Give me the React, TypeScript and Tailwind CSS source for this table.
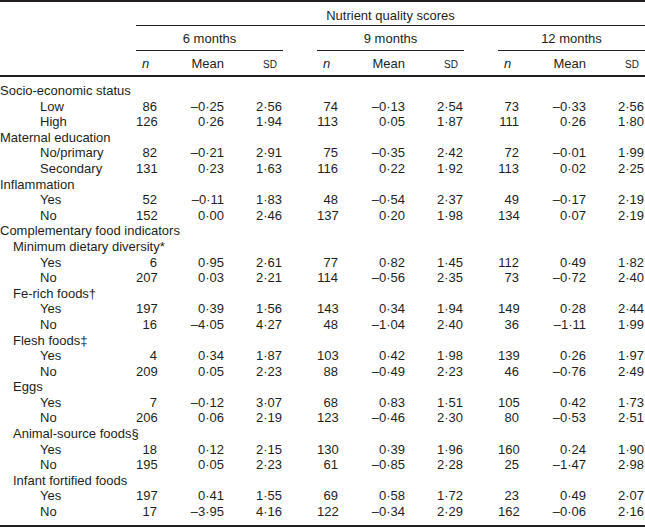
type Row = {
  label: string;
  level: 0 | 1 | 2;
  values?: string[][];
};

const rows: Row[] = [
  { label: 'Socio-economic status', level: 0 },
  { label: 'Low', level: 2, values: [['86', '–0·25', '2·56'], ['74', '–0·13', '2·54'], ['73', '–0·33', '2·56']] },
  { label: 'High', level: 2, values: [['126', '0·26', '1·94'], ['113', '0·05', '1·87'], ['111', '0·26', '1·80']] },
  { label: 'Maternal education', level: 0 },
  { label: 'No/primary', level: 2, values: [['82', '–0·21', '2·91'], ['75', '–0·35', '2·42'], ['72', '–0·01', '1·99']] },
  { label: 'Secondary', level: 2, values: [['131', '0·23', '1·63'], ['116', '0·22', '1·92'], ['113', '0·02', '2·25']] },
  { label: 'Inflammation', level: 0 },
  { label: 'Yes', level: 2, values: [['52', '–0·11', '1·83'], ['48', '–0·54', '2·37'], ['49', '–0·17', '2·19']] },
  { label: 'No', level: 2, values: [['152', '0·00', '2·46'], ['137', '0·20', '1·98'], ['134', '0·07', '2·19']] },
  { label: 'Complementary food indicators', level: 0 },
  { label: 'Minimum dietary diversity*', level: 1 },
  { label: 'Yes', level: 2, values: [['6', '0·95', '2·61'], ['77', '0·82', '1·45'], ['112', '0·49', '1·82']] },
  { label: 'No', level: 2, values: [['207', '0·03', '2·21'], ['114', '–0·56', '2·35'], ['73', '–0·72', '2·40']] },
  { label: 'Fe-rich foods†', level: 1 },
  { label: 'Yes', level: 2, values: [['197', '0·39', '1·56'], ['143', '0·34', '1·94'], ['149', '0·28', '2·44']] },
  { label: 'No', level: 2, values: [['16', '–4·05', '4·27'], ['48', '–1·04', '2·40'], ['36', '–1·11', '1·99']] },
  { label: 'Flesh foods‡', level: 1 },
  { label: 'Yes', level: 2, values: [['4', '0·34', '1·87'], ['103', '0·42', '1·98'], ['139', '0·26', '1·97']] },
  { label: 'No', level: 2, values: [['209', '0·05', '2·23'], ['88', '–0·49', '2·23'], ['46', '–0·76', '2·49']] },
  { label: 'Eggs', level: 1 },
  { label: 'Yes', level: 2, values: [['7', '–0·12', '3·07'], ['68', '0·83', '1·51'], ['105', '0·42', '1·73']] },
  { label: 'No', level: 2, values: [['206', '0·06', '2·19'], ['123', '–0·46', '2·30'], ['80', '–0·53', '2·51']] },
  { label: 'Animal-source foods§', level: 1 },
  { label: 'Yes', level: 2, values: [['18', '0·12', '2·15'], ['130', '0·39', '1·96'], ['160', '0·24', '1·90']] },
  { label: 'No', level: 2, values: [['195', '0·05', '2·23'], ['61', '–0·85', '2·28'], ['25', '–1·47', '2·98']] },
  { label: 'Infant fortified foods', level: 1 },
  { label: 'Yes', level: 2, values: [['197', '0·41', '1·55'], ['69', '0·58', '1·72'], ['23', '0·49', '2·07']] },
  { label: 'No', level: 2, values: [['17', '–3·95', '4·16'], ['122', '–0·34', '2·29'], ['162', '–0·06', '2·16']] },
];

const periods = ['6 months', '9 months', '12 months'];

const indent = ['pl-0', 'pl-[13px]', 'pl-[40px]'];

const Gap = () => <div className="w-[34px] shrink-0" />;

const App = () => {
  return (
    <div
      className="w-[645px] bg-white text-[13px] text-[#231f20] border-t-2 border-[#231f20]"
      style={{ fontFamily: '"Liberation Sans", Arial, sans-serif' }}
    >
      {/* Spanner header */}
      <div className="flex">
        <div className="w-[136px] shrink-0" />
        <div className="flex-1 h-[24px] pt-[4px] flex items-center justify-center border-b border-[#231f20]">
          Nutrient quality scores
        </div>
      </div>

      {/* Age groups */}
      <div className="flex">
        <div className="w-[136px] shrink-0" />
        {periods.map((p, i) => (
          <div key={p} className="flex">
            {i > 0 && <Gap />}
            <div className="w-[147px] h-[25px] pt-[2px] flex items-center justify-center border-b border-[#231f20]">
              {p}
            </div>
          </div>
        ))}
      </div>

      {/* Column headers */}
      <div className="flex h-[26px] pt-[2px] border-b-2 border-[#231f20]">
        <div className="w-[136px] shrink-0" />
        {periods.map((p, i) => (
          <div key={p} className="flex items-center">
            {i > 0 && <Gap />}
            <div className="w-[147px] flex items-center">
              <div className="w-[19px] text-center italic">n</div>
              <div className="w-[69px] text-right">Mean</div>
              <div className="w-[58px] text-right pr-[5px] text-[10px]">SD</div>
            </div>
          </div>
        ))}
      </div>

      {/* Body */}
      <div className="pt-[6px] pb-[5px] border-b-2 border-[#231f20]">
        {rows.map((row, r) => (
          <div key={r} className="flex h-[15.6px] leading-[15.6px] whitespace-nowrap">
            <div className={`w-[136px] shrink-0 ${indent[row.level]}`}>{row.label}</div>
            {row.values &&
              row.values.map((v, i) => (
                <div key={i} className="flex">
                  {i > 0 && <Gap />}
                  <div className="w-[147px] flex">
                    <div className="w-[21px] text-right">{v[0]}</div>
                    <div className="w-[67px] text-right">{v[1]}</div>
                    <div className="w-[58px] text-right">{v[2]}</div>
                  </div>
                </div>
              ))}
          </div>
        ))}
      </div>
    </div>
  );
};

export default App;
